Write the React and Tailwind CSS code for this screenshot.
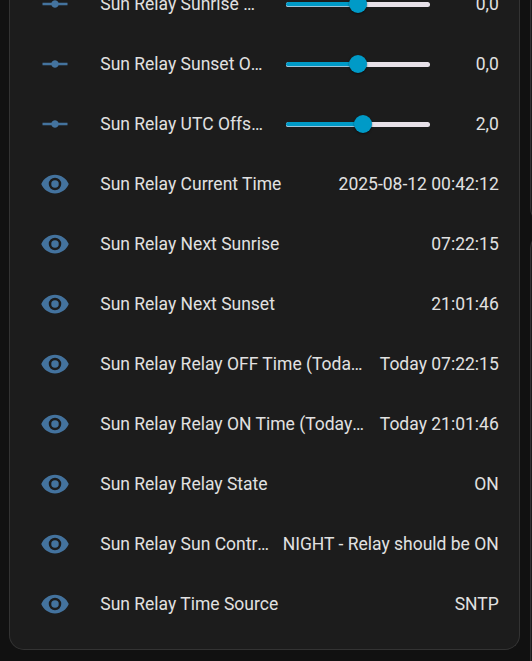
const EYE =
  "M12,9A3,3 0 0,0 9,12A3,3 0 0,0 12,15A3,3 0 0,0 15,12A3,3 0 0,0 12,9M12,17A5,5 0 0,1 7,12A5,5 0 0,1 12,7A5,5 0 0,1 17,12A5,5 0 0,1 12,17M12,4.5C7,4.5 2.73,7.61 1,12C2.73,16.39 7,19.5 12,19.5C17,19.5 21.27,16.39 23,12C21.27,7.61 17,4.5 12,4.5Z";
const RAY_VERTEX =
  "M2 11H9.17C9.58 9.83 10.69 9 12 9S14.42 9.83 14.83 11H22V13H14.83C14.42 14.17 13.31 15 12 15S9.58 14.17 9.17 13H2V11Z";

const numbers = [
  { name: "Sun Relay Sunrise Offset", value: "0,0", fill: 71.5 },
  { name: "Sun Relay Sunset Offset", value: "0,0", fill: 71.5 },
  { name: "Sun Relay UTC Offset", value: "2,0", fill: 77 },
];

const sensors = [
  { name: "Sun Relay Current Time", value: "2025-08-12 00:42:12" },
  { name: "Sun Relay Next Sunrise", value: "07:22:15" },
  { name: "Sun Relay Next Sunset", value: "21:01:46" },
  { name: "Sun Relay Relay OFF Time (Today/Next)", value: "Today 07:22:15" },
  { name: "Sun Relay Relay ON Time (Today/Next)", value: "Today 21:01:46" },
  { name: "Sun Relay Relay State", value: "ON" },
  { name: "Sun Relay Sun Control Status", value: "NIGHT - Relay should be ON" },
  { name: "Sun Relay Time Source", value: "SNTP" },
];

function Icon({ path }) {
  return (
    <svg viewBox="0 0 24 24" className="mr-[30.25px] size-[30px] shrink-0 fill-[#44739e]">
      <path d={path} />
    </svg>
  );
}

function Slider({ fill }) {
  return (
    <div className="relative mt-px h-[5px] w-36 shrink-0 rounded-full bg-[#e7e0e8]">
      <div className="h-[5px] rounded-l-full border-b border-[#9bc4dc] bg-[#009ac7]" style={{ width: fill }} />
      <div
        className="absolute -top-[7px] size-[18px] -translate-x-1/2 rounded-full bg-[#009ac7] shadow-[0_1px_2px_rgba(0,0,0,0.5)]"
        style={{ left: fill }}
      />
    </div>
  );
}

function NumberRow({ name, value, fill }) {
  return (
    <div className="flex h-[60px] shrink-0 items-center">
      <Icon path={RAY_VERTEX} />
      <div className="w-[165px] shrink-0 truncate">{name}</div>
      <div className="ml-[20.75px] flex grow items-center justify-between">
        <Slider fill={fill} />
        <span>{value}</span>
      </div>
    </div>
  );
}

function SensorRow({ name, value }) {
  return (
    <div className="flex h-[60px] shrink-0 items-center">
      <Icon path={EYE} />
      <div className="min-w-0 grow truncate">{name}</div>
      <div className="ml-2.5 shrink-0">{value}</div>
    </div>
  );
}

export default function App() {
  return (
    <div className="flex h-[661px] w-[532px] gap-2.5 overflow-hidden bg-[#111111] pl-[9px] font-['Roboto',sans-serif] text-[17.5px] leading-[25px] text-[#e1e1e1]">
      <div className="flex h-[650px] w-[511px] shrink-0 flex-col justify-end rounded-b-[15px] border border-t-0 border-[#333333] bg-[#1c1c1c] pr-[20.25px] pb-[15px] pl-[30px]">
        {numbers.map((n) => (
          <NumberRow key={n.name} {...n} />
        ))}
        {sensors.map((s) => (
          <SensorRow key={s.name} {...s} />
        ))}
      </div>
      <div className="flex w-20 shrink-0 flex-col gap-2.5">
        <div className="h-[223px] shrink-0 rounded-b-[15px] border border-t-0 border-[#333333] bg-[#1c1c1c]" />
        <div className="h-[500px] shrink-0 rounded-[15px] border border-[#333333] bg-[#1c1c1c]" />
      </div>
    </div>
  );
}
